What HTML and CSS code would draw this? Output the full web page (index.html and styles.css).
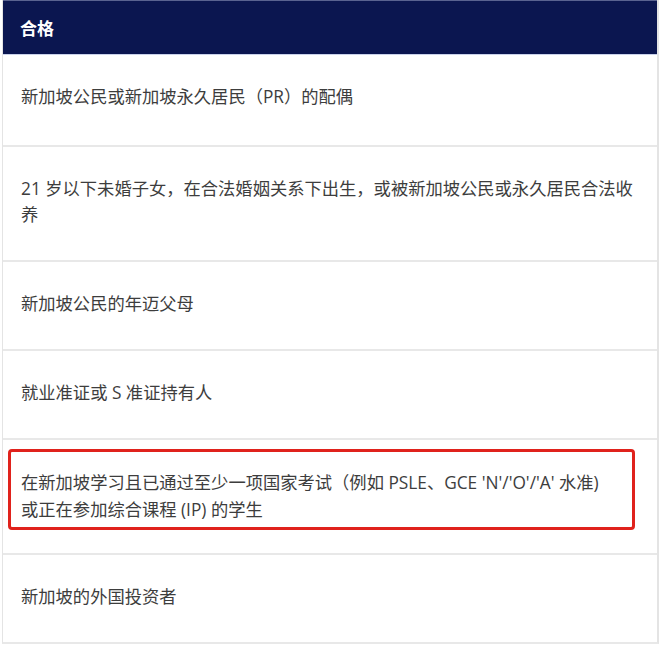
FILE: index.html
```html
<!DOCTYPE html>
<html lang="zh">
<head>
<meta charset="utf-8">
<link rel="stylesheet" href="styles.css">
</head>
<body>
<div class="table">
  <div class="head">合格</div>
  <div class="row first">新加坡公民或新加坡永久居民（PR）的配偶</div>
  <div class="row">21 岁以下未婚子女，在合法婚姻关系下出生，或被新加坡公民或永久居民合法收养</div>
  <div class="row">新加坡公民的年迈父母</div>
  <div class="row">就业准证或 S 准证持有人</div>
  <div class="row marked">在新加坡学习且已通过至少一项国家考试（例如 PSLE、GCE 'N'/'O'/'A' 水准)<br>或正在参加综合课程 (IP) 的学生<span class="mark"></span></div>
  <div class="row">新加坡的外国投资者</div>
</div>
</body>
</html>
```

FILE: styles.css
```css
html, body {
  margin: 0;
  padding: 0;
  background: #ffffff;
}
body {
  font-family: "Open Sans", "Noto Sans CJK SC", sans-serif;
  color: #3d3d3d;
}
.table {
  margin-left: 2px;
  width: 654px;
  border-left: 1px solid #e4e4e4;
  border-right: 2px solid #e4e4e4;
  border-bottom: 2px solid #e8e8e8;
}
.head {
  background: #0b1650;
  color: #ffffff;
  font-weight: 700;
  font-size: 17px;
  height: 55px;
  line-height: 55px;
  padding-left: 17px;
  border-top: 1px solid #5a6390;
  box-sizing: border-box;
  border-bottom: 1px solid #c9d1ea;
}
.row {
  position: relative;
  font-size: 17.3px;
  line-height: 26px;
  padding: 29px 18px 32px 18px;
  border-top: 2px solid #e8e8e8;
}
.row.first {
  border-top: none;
  padding-bottom: 35px;
}
.row.marked {
  line-height: 27px;
  padding-bottom: 30px;
}
.mark {
  position: absolute;
  left: 5px;
  top: 9px;
  width: 621px;
  height: 75px;
  border: 3.5px solid #e0221c;
  border-radius: 4px;
}
```
